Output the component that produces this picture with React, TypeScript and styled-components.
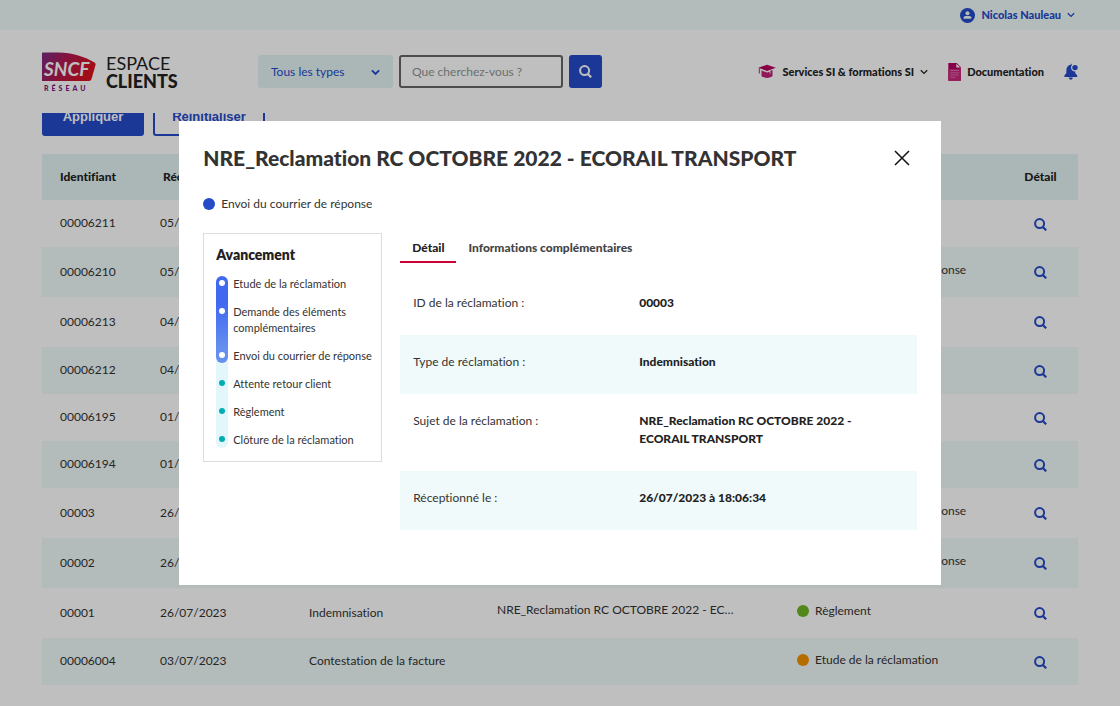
import React from "react";
import styled, { createGlobalStyle } from "styled-components";

const Global = createGlobalStyle`
  *{box-sizing:border-box}
  body{margin:0;background:#fff;color:#333;font-family:Lato,"Liberation Sans",sans-serif;font-size:12px;line-height:18px;font-variant-ligatures:none}
  button,input,select{font:inherit;color:inherit}
  button{cursor:pointer}
  a{color:inherit;text-decoration:none}
  svg{display:block;flex:none}
`;

const BLUE = "#254bc9";
const MINT = "#e4f5f5";
const PALE = "#f0fafa";
const INK = "#222";

const Page = styled.div`
  min-height: 100vh;
`;
const TopBar = styled.div`
  height: 30px;
  padding: 0 45px;
  display: flex;
  justify-content: flex-end;
  align-items: center;
  background: ${PALE};
`;
const UserButton = styled.button`
  display: flex;
  align-items: center;
  gap: 6px;
  padding: 0;
  border: 0;
  background: none;
  color: ${BLUE};
  font-size: 11px;
  font-weight: 900;
`;
const Header = styled.header`
  height: 83px;
  padding: 0 42px;
  display: flex;
  align-items: center;
  background: #fff;
`;
const Brand = styled.a`
  flex: none;
  width: 216px;
  display: flex;
  align-items: center;
  gap: 10px;
`;
const BrandText = styled.span`
  display: flex;
  flex-direction: column;
  color: ${INK};
  font-size: 18px;
  line-height: 18px;
`;
const BrandStrong = styled.strong`
  font-weight: 900;
`;
const Search = styled.form`
  display: flex;
  gap: 6px;
`;
const SelectBox = styled.div`
  position: relative;
  width: 135px;
  height: 33px;
  color: ${BLUE};
`;
const SelectArrow = styled.span`
  position: absolute;
  right: 13px;
  top: 14px;
  pointer-events: none;
`;
const TypeSelect = styled.select`
  appearance: none;
  width: 100%;
  height: 100%;
  padding: 0 13px;
  border: 0;
  border-radius: 3px;
  background: ${MINT};
`;
const SearchInput = styled.input`
  width: 164px;
  height: 33px;
  padding: 0 11px;
  border: 2px solid #666;
  border-radius: 3px;
  background: #fff;
  &::placeholder {
    color: #8f9494;
    opacity: 1;
  }
`;
const SearchButton = styled.button`
  width: 33px;
  height: 33px;
  padding: 0;
  display: grid;
  place-items: center;
  border: 0;
  border-radius: 3px;
  background: ${BLUE};
  color: #fff;
`;
const Nav = styled.nav`
  margin-left: auto;
  display: flex;
  align-items: center;
  gap: 20px;
`;
const NavLink = styled.a`
  display: flex;
  align-items: center;
  gap: 6px;
  color: ${INK};
  font-size: 11px;
  font-weight: 900;
`;
const BellButton = styled.button`
  padding: 0;
  border: 0;
  background: none;
  color: ${BLUE};
`;

const Main = styled.main`
  padding: 0 42px 22px;
`;
const FilterActions = styled.div`
  height: 23px;
  margin-bottom: 18px;
  overflow: hidden;
  display: flex;
  align-items: flex-end;
  gap: 9px;
`;
const ActionButton = styled.button<{ $primary?: boolean }>`
  flex: none;
  width: ${(p) => (p.$primary ? 102 : 112)}px;
  height: 38px;
  padding: 0;
  border: 2px solid ${BLUE};
  border-radius: 3px;
  background: ${(p) => (p.$primary ? BLUE : "#fff")};
  color: ${(p) => (p.$primary ? "#fff" : BLUE)};
  font-family: "Liberation Sans", Arial, sans-serif;
  font-size: 13px;
  font-weight: 700;
`;
const Table = styled.table`
  width: 100%;
  border-collapse: collapse;
  table-layout: fixed;
`;
const Col = styled.col<{ $w?: number }>`
  width: ${(p) => (p.$w ? p.$w + "px" : "auto")};
`;
const HeadCell = styled.th<{ $center?: boolean }>`
  height: 46px;
  padding: 0 0 0 ${(p) => (p.$center ? 0 : 3)}px;
  background: ${MINT};
  color: ${INK};
  font-weight: 900;
  text-align: ${(p) => (p.$center ? "center" : "left")};
  &:first-child {
    padding-left: 18px;
  }
`;
const Row = styled.tr<{ $tall: boolean }>`
  height: ${(p) => (p.$tall ? 50 : 47)}px;
  &:nth-child(even) {
    background: ${PALE};
  }
`;
const Cell = styled.td`
  padding: 0 0 1px;
  &:first-child {
    padding-left: 18px;
  }
`;
const SubjectCell = styled(Cell)`
  padding-bottom: 7px;
  white-space: nowrap;
`;
const StatusCell = styled(Cell)`
  padding-bottom: 4px;
`;
const Status = styled.span`
  display: flex;
  align-items: center;
  gap: 6px;
  white-space: nowrap;
`;
const Dot = styled.i<{ $color: string }>`
  flex: none;
  width: 12px;
  height: 12px;
  border-radius: 50%;
  background: ${(p) => p.$color};
`;
const DetailButton = styled.button`
  display: block;
  margin: 2px auto 0;
  padding: 0;
  border: 0;
  background: none;
  color: ${BLUE};
`;

const Overlay = styled.div`
  position: fixed;
  inset: 0;
  display: flex;
  align-items: center;
  justify-content: center;
  background: rgba(0, 0, 0, 0.25);
`;
const Dialog = styled.section`
  width: 68%;
  min-height: 464px;
  padding: 24px;
  background: #fff;
`;
const DialogHead = styled.div`
  display: flex;
  justify-content: space-between;
  align-items: center;
  margin-bottom: 24px;
`;
const Title = styled.h1`
  margin: 0;
  color: #333;
  font-size: 21px;
  line-height: 26px;
  font-weight: 900;
`;
const CloseButton = styled.button`
  padding: 0 7px;
  border: 0;
  background: none;
  color: #111;
`;
const Columns = styled.div`
  margin-top: 20px;
  display: flex;
  align-items: flex-start;
  gap: 18px;
`;
const Progress = styled.aside`
  flex: none;
  width: 179px;
  padding: 12px 0 13px 12px;
  border: 1px solid #ddd;
`;
const ProgressTitle = styled.h2`
  margin: 0 0 12px;
  color: ${INK};
  font-size: 14px;
  line-height: 18px;
  font-weight: 800;
`;
const Steps = styled.ol`
  margin: 0;
  padding: 0;
  list-style: none;
`;
const Rail = styled.span`
  flex: none;
  width: 12px;
  background: #e3f6f9;
`;
const RailFill = styled.span<{ $fill?: string; $current: boolean }>`
  height: ${(p) => (p.$current ? "15px" : "100%")};
  padding-top: 4px;
  display: flex;
  justify-content: center;
  background: ${(p) => p.$fill || "none"};
  border-radius: ${(p) => (p.$current ? "0 0 6px 6px" : "0")};
`;
const RailDot = styled.i<{ $done: boolean }>`
  width: 6px;
  height: 6px;
  border-radius: 50%;
  background: ${(p) => (p.$done ? "#fff" : "#00adb5")};
`;
const StepText = styled.span`
  padding-bottom: 12px;
`;
const Step = styled.li`
  display: flex;
  gap: 5px;
  font-size: 11px;
  line-height: 16px;
  &:first-child ${Rail} {
    border-radius: 6px 6px 0 0;
    overflow: hidden;
  }
  &:last-child ${Rail} {
    border-radius: 0 0 6px 6px;
  }
  &:last-child ${StepText} {
    padding-bottom: 0;
  }
`;
const Details = styled.div`
  flex: 1;
  min-width: 0;
`;
const Tabs = styled.div`
  display: flex;
  margin-bottom: 13px;
`;
const Tab = styled.button<{ $active?: boolean }>`
  height: 30px;
  padding: 2px 12px 0;
  border: 0;
  border-bottom: 2px solid ${(p) => (p.$active ? "#cd0037" : "transparent")};
  background: none;
  color: ${(p) => (p.$active ? INK : "#444")};
  font-weight: 900;
`;
const DetailList = styled.dl`
  margin: 0;
`;
const DetailRow = styled.div`
  display: grid;
  grid-template-columns: 226px 1fr;
  padding: 18px 18px 23px 13px;
  &:nth-child(even) {
    background: ${PALE};
  }
`;
const Term = styled.dt``;
const Value = styled.dd`
  margin: 0;
  color: ${INK};
  font-weight: 900;
`;

const Chevron = ({ size = 8, weight = 2 }) => (
  <svg width={size} height={size * 0.75} viewBox="0 0 8 6" fill="none" stroke="currentColor" strokeWidth={weight} aria-hidden>
    <path d="M.8 1.2 4 4.4 7.2 1.2" />
  </svg>
);

const Magnifier = () => (
  <svg width="13" height="13" viewBox="0 0 13 13" fill="none" stroke="currentColor" strokeWidth="2" aria-hidden>
    <circle cx="5.600" cy="5.600" r="4.500" />
    <path d="M8.600 8.800 12.200 12.300" strokeWidth="2.200" />
  </svg>
);

const Logo = () => (
  <svg width="54" height="40" viewBox="0 0 54 40" aria-hidden>
    <defs>
      <linearGradient id="sncf" x1="0" y1="0" x2="1" y2=".3">
        <stop offset="0" stopColor="#7b2c88" />
        <stop offset=".45" stopColor="#b01a52" />
        <stop offset="1" stopColor="#d8121f" />
      </linearGradient>
    </defs>
    <path d="M0 1.5Q0 .5 1 .5H16C31 .5 43 5 52.500 10.400Q54 11.300 53.600 12.800L49.500 27Q49 29 47 29H0Z" fill="url(#sncf)" />
    <text x="2" y="24" fill="#fff" fontFamily="Lato" fontSize="19" fontWeight="700" fontStyle="italic">SNCF</text>
    <text x="2" y="38.500" fill="#7b2078" fontFamily="Lato" fontSize="7" fontWeight="900" letterSpacing="3">RÉSEAU</text>
  </svg>
);

const UserIcon = () => (
  <svg width="15" height="15" viewBox="0 0 15 15" aria-hidden>
    <circle cx="7.500" cy="7.500" r="7.500" fill="currentColor" />
    <circle cx="7.500" cy="5.300" r="2" fill={PALE} />
    <path d="M3.600 10.800V9.600Q3.600 8 5.600 8H9.400Q11.400 8 11.400 9.600V10.800Z" fill={PALE} />
  </svg>
);

const CapIcon = () => (
  <svg width="18" height="15" viewBox="0 0 18 15" aria-hidden>
    <path d="M9 .8 17.800 3.700 9 6.900.3 3.700Z" fill="#b5005f" />
    <path d="M1.300 4.200V9.500" stroke="#c02074" strokeWidth="1" />
    <path d="M3.500 5.900 9 8 14.500 5.900V12.300Q9 15.800 3.500 12.300Z" fill="#c02074" />
    <path d="M4 6.300 9 8.100 12 7V9.600" fill="none" stroke="#fff" strokeWidth=".9" />
  </svg>
);

const DocIcon = () => (
  <svg width="13" height="18" viewBox="0 0 13 18" aria-hidden>
    <path d="M.3 0H8.700L12.800 4.200V17.700H.3Z" fill="#b5005f" />
    <path d="M.3 6H12.800V17.700H.3Z" fill="#c8287c" />
    <path d="M8.300.8V4.600H12.200Z" fill="#fff" />
    <path d="M2.200 7.500H10.800M2.200 9.800H10.800M2.200 12H10.800M2.200 14.300H7.500" stroke="#e486b6" strokeWidth=".7" />
  </svg>
);

const BellIcon = () => (
  <svg width="14" height="17" viewBox="0 0 14 17" fill="currentColor" aria-hidden>
    <path d="M6.800.8V1.700C4 2.100 2.400 4.300 2.400 7V10L.4 12.600V14H13.200V12.600L11.200 10V8.600A4 4 0 0 1 8 1.900L7.600 1.700V.8Z" />
    <circle cx="11" cy="4.600" r="2.700" />
    <path d="M4.700 14.500H8.900Q8.500 16.700 6.800 16.700T4.700 14.500Z" />
  </svg>
);

const CloseIcon = () => (
  <svg width="16" height="16" viewBox="0 0 16 16" stroke="currentColor" strokeWidth="1.500" aria-hidden>
    <path d="M1 1 15 15M15 1 1 15" />
  </svg>
);

const CLAIM = "Indemnisation";
const SUBJECT = "NRE_Reclamation RC OCTOBRE 2022 - EC…";
const STUDY = { label: "Etude de la réclamation", color: "#f39200" };
const REPLY = { label: "Envoi du courrier de réponse", color: BLUE };
const PAYMENT = { label: "Règlement", color: "#6eb424" };

const rows = [
  { id: "00006211", date: "05/07/2023", type: CLAIM, subject: "", status: STUDY, tall: false },
  { id: "00006210", date: "05/07/2023", type: CLAIM, subject: "", status: REPLY, tall: true },
  { id: "00006213", date: "04/07/2023", type: CLAIM, subject: "", status: STUDY, tall: true },
  { id: "00006212", date: "04/07/2023", type: CLAIM, subject: "", status: STUDY, tall: false },
  { id: "00006195", date: "01/07/2023", type: CLAIM, subject: "", status: STUDY, tall: false },
  { id: "00006194", date: "01/07/2023", type: CLAIM, subject: "", status: STUDY, tall: false },
  { id: "00003", date: "26/07/2023", type: CLAIM, subject: SUBJECT, status: REPLY, tall: true },
  { id: "00002", date: "26/07/2023", type: CLAIM, subject: SUBJECT, status: REPLY, tall: true },
  { id: "00001", date: "26/07/2023", type: CLAIM, subject: SUBJECT, status: PAYMENT, tall: true },
  { id: "00006004", date: "03/07/2023", type: "Contestation de la facture", subject: "", status: STUDY, tall: false },
];

const steps = [
  { label: "Etude de la réclamation", fill: "#4069f0" },
  { label: "Demande des éléments complémentaires", fill: "linear-gradient(#4069f0, #648fee)" },
  { label: "Envoi du courrier de réponse", fill: "#648fee", current: true },
  { label: "Attente retour client" },
  { label: "Règlement" },
  { label: "Clôture de la réclamation" },
];

const details = [
  ["ID de la réclamation :", "00003"],
  ["Type de réclamation :", "Indemnisation"],
  ["Sujet de la réclamation :", "NRE_Reclamation RC OCTOBRE 2022 - ECORAIL TRANSPORT"],
  ["Réceptionné le :", "26/07/2023 à 18:06:34"],
];

export default function App() {
  return (
    <>
      <Global />
      <Page>
        <TopBar>
          <UserButton type="button">
            <UserIcon />
            Nicolas Nauleau
            <Chevron weight={1.3} />
          </UserButton>
        </TopBar>
        <Header>
          <Brand href="#" aria-label="SNCF Réseau Espace Clients">
            <Logo />
            <BrandText>
              ESPACE
              <BrandStrong>CLIENTS</BrandStrong>
            </BrandText>
          </Brand>
          <Search onSubmit={(e) => e.preventDefault()}>
            <SelectBox>
              <TypeSelect aria-label="Type">
                <option>Tous les types</option>
              </TypeSelect>
              <SelectArrow>
                <Chevron size={9} weight={1.7} />
              </SelectArrow>
            </SelectBox>
            <SearchInput type="search" aria-label="Recherche" placeholder="Que cherchez-vous ?" />
            <SearchButton aria-label="Rechercher">
              <Magnifier />
            </SearchButton>
          </Search>
          <Nav>
            <NavLink href="#">
              <CapIcon />
              Services SI &amp; formations SI
              <Chevron weight={1.3} />
            </NavLink>
            <NavLink href="#">
              <DocIcon />
              Documentation
            </NavLink>
            <BellButton type="button" aria-label="Notifications">
              <BellIcon />
            </BellButton>
          </Nav>
        </Header>
        <Main>
          <FilterActions>
            <ActionButton type="button" $primary>Appliquer</ActionButton>
            <ActionButton type="button">Réinitialiser</ActionButton>
          </FilterActions>
          <Table>
            <colgroup>
              <Col $w={118} />
              <Col $w={149} />
              <Col $w={188} />
              <Col />
              <Col $w={206} />
              <Col $w={75} />
            </colgroup>
            <thead>
              <tr>
                <HeadCell>Identifiant</HeadCell>
                <HeadCell>Réceptionné le</HeadCell>
                <HeadCell>Type</HeadCell>
                <HeadCell>Sujet</HeadCell>
                <HeadCell>Statut</HeadCell>
                <HeadCell $center>Détail</HeadCell>
              </tr>
            </thead>
            <tbody>
              {rows.map((r) => (
                <Row key={r.id} $tall={r.tall}>
                  <Cell>{r.id}</Cell>
                  <Cell>{r.date}</Cell>
                  <Cell>{r.type}</Cell>
                  <SubjectCell>{r.subject}</SubjectCell>
                  <StatusCell>
                    <Status>
                      <Dot $color={r.status.color} />
                      {r.status.label}
                    </Status>
                  </StatusCell>
                  <Cell>
                    <DetailButton type="button" aria-label={"Détail " + r.id}>
                      <Magnifier />
                    </DetailButton>
                  </Cell>
                </Row>
              ))}
            </tbody>
          </Table>
        </Main>
      </Page>
      <Overlay>
        <Dialog role="dialog" aria-modal="true" aria-labelledby="claim-title">
          <DialogHead>
            <Title id="claim-title">NRE_Reclamation RC OCTOBRE 2022 - ECORAIL TRANSPORT</Title>
            <CloseButton type="button" aria-label="Fermer">
              <CloseIcon />
            </CloseButton>
          </DialogHead>
          <Status>
            <Dot $color={BLUE} />
            Envoi du courrier de réponse
          </Status>
          <Columns>
            <Progress>
              <ProgressTitle>Avancement</ProgressTitle>
              <Steps>
                {steps.map((s) => (
                  <Step key={s.label}>
                    <Rail>
                      <RailFill $fill={s.fill} $current={!!s.current}>
                        <RailDot $done={!!s.fill} />
                      </RailFill>
                    </Rail>
                    <StepText>{s.label}</StepText>
                  </Step>
                ))}
              </Steps>
            </Progress>
            <Details>
              <Tabs role="tablist">
                <Tab type="button" role="tab" aria-selected="true" $active>Détail</Tab>
                <Tab type="button" role="tab" aria-selected="false">Informations complémentaires</Tab>
              </Tabs>
              <DetailList>
                {details.map(([label, value]) => (
                  <DetailRow key={label}>
                    <Term>{label}</Term>
                    <Value>{value}</Value>
                  </DetailRow>
                ))}
              </DetailList>
            </Details>
          </Columns>
        </Dialog>
      </Overlay>
    </>
  );
}
